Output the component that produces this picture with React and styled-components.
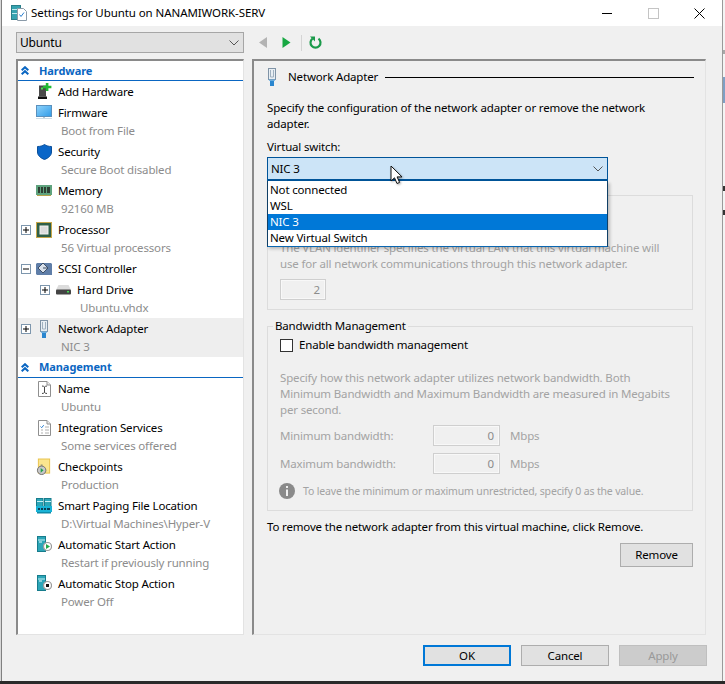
import React from "react";
import styled, { createGlobalStyle } from "styled-components";

const Global = createGlobalStyle`
  html, body { margin: 0; padding: 0; background: #fff; }
  * { box-sizing: border-box; }
`;

const Screen = styled.div`
  width: 725px; height: 684px; overflow: hidden;
  display: flex; flex-direction: column;
  font-family: "Noto Sans", "Open Sans", sans-serif;
  font-size: 11.5px; line-height: 16px; letter-spacing: -0.16px; color: #000; background: #f0f0f0;
`;
const Stage = styled.div`display: flex; height: 681px;`;
const BottomEdge = styled.div`height: 3px; background: #2a2a2a;`;
const LeftEdge = styled.div`width: 2px; background: #d8d8d8; border-right: 1px solid #808080;`;
const RightEdge = styled.div`
  position: relative; width: 3px; overflow: hidden;
  background: #f4f4f4; border-left: 1px solid #9a9a9a;
`;
const EdgeMark = styled.div`
  position: absolute; left: 0; width: 3px;
  top: ${p => p.$top}px; height: ${p => p.$h}px; background: ${p => p.$c};
`;
const Win = styled.div`width: 720px; display: flex; flex-direction: column; background: #f0f0f0;`;
const TitleBar = styled.div`
  height: 26px; background: #fff; display: flex; align-items: center;
  padding: 0 17px 0 9px; flex: none;
`;
const TitleText = styled.div`margin-left: 4px; flex: 1; white-space: nowrap; letter-spacing: -0.08px;`;
const Controls = styled.div`display: flex; align-items: center; gap: 35px;`;
const Body = styled.div`flex: 1; padding: 6px 15px 0 14px; display: flex; flex-direction: column;`;
const Columns = styled.div`
  display: grid; grid-template-columns: 228px 454px; grid-template-rows: 21px 576px;
  column-gap: 8px; row-gap: 6px;
`;
const Combo = styled.div`
  display: flex; align-items: center; justify-content: space-between;
  background: #e1e1e1; border: 1px solid #a6a6a6; padding: 0 4px 0 3px; font-size: 12px;
`;
const Toolbar = styled.div`display: flex; align-items: center; padding-left: 7px;`;
const Gap = styled.span`width: 14px;`;
const Sep = styled.div`width: 1px; height: 16px; background: #d4d4d4; margin: 0 7px 0 10px;`;
const Tree = styled.div`
  background: #fff; border-style: solid; border-width: 2px 1px 1px 2px;
  border-color: #8a8a8a #e3e3e3 #e3e3e3 #8a8a8a; display: flex; flex-direction: column;
`;
const GroupHead = styled.div`
  height: ${p => p.$h}px; flex: none; display: flex; align-items: center; padding-left: 3px;
  border-bottom: 1px solid #0a66c2; color: #0a66c2; font-weight: 700; font-size: 11px; letter-spacing: -0.08px;
`;
const GroupName = styled.span`margin-left: 10px;`;
const ItemBox = styled.div`background: ${p => (p.$selected ? "#eeeeee" : "transparent")};`;
const ItemRow = styled.div`
  height: 21px; display: flex; align-items: center; padding-left: ${p => 3 + p.$depth * 19}px;
`;
const ExpandSlot = styled.div`width: 15px; flex: none; display: flex; align-items: center;`;
const IconSlot = styled.div`width: 16px; height: 18px; flex: none; display: flex; align-items: center; justify-content: center; margin-right: 6px;`;
const ItemSub = styled.div`
  height: 18px; line-height: 16px; color: #8c8c8c; white-space: nowrap;
  padding-left: ${p => 43 + p.$depth * 19}px;
`;
const Panel = styled.div`
  background: #f0f0f0; border-style: solid; border-width: 2px 1px 1px 2px;
  border-color: #8a8a8a #e3e3e3 #e3e3e3 #8a8a8a; padding: 8px 12px 0 13px;
`;
const PanelHead = styled.div`display: flex; align-items: center; height: 16px;`;
const PanelTitle = styled.div`margin-left: 11px; margin-right: 7px; white-space: nowrap;`;
const HeadRule = styled.div`flex: 1; height: 1px; background: #000; margin-right: -1px;`;
const Para = styled.p`
  margin: ${p => p.$top || 0}px 0 0; color: ${p => (p.$off ? "#a3a3a3" : "#000")};
`;
const Label = styled.div`margin-top: 7px;`;
const SelectWrap = styled.div`position: relative; width: 341px; margin-top: 2px;`;
const SelectBox = styled.div`
  height: 24px; background: #cce4f7; border: 1px solid #005499;
  border-bottom-width: 2px; display: flex; align-items: center; justify-content: space-between;
  padding: 0 4px 0 3px;
`;
const Dropdown = styled.div`
  position: absolute; left: 0; right: 0; top: 24px; height: 66px; z-index: 3; padding-top: 1px;
  background: #fff; border: 1px solid #0f3f66; border-top: 0; border-bottom: 1px solid #0a66b0;
  box-shadow: 2px 2px 3px rgba(0,0,0,.22);
`;
const Option = styled.div`
  height: 16px; padding-left: 2px;
  background: ${p => (p.$on ? "#0078d7" : "transparent")}; color: ${p => (p.$on ? "#fff" : "#000")};
`;
const Pointer = styled.svg`
  position: absolute; left: 123px; top: 8px; z-index: 4;
  filter: drop-shadow(1px 1px 1px rgba(0,0,0,.35));
`;
const Frame = styled.div`
  height: 115px; margin-top: 14px; border: 1px solid #dcdcdc; padding: 44px 12px 0;
  color: #a3a3a3;
`;
const Field = styled.div`
  width: ${p => p.$w}px; height: 21px; border: 1px solid #cfcfcf; box-shadow: inset 0 0 0 1px #f8f8f8;
  background: #f0f0f0; color: #8c8c8c; text-align: right; padding-right: 5px; line-height: 19px; flex: none;
`;
const VlanField = styled(Field)`margin-top: 7px;`;
const Fieldset = styled.fieldset`
  margin: 8px 0 0; padding: 3px 12px 11px; border: 1px solid #dcdcdc; min-width: 0;
`;
const Legend = styled.legend`padding: 0 2px; margin-left: -7px; line-height: 16px;`;
const CheckRow = styled.label`display: flex; align-items: center; height: 16px;`;
const CheckBox = styled.span`
  width: 13px; height: 13px; border: 1px solid #333; background: #fff; margin-right: 6px; flex: none;
`;
const BandRow = styled.div`
  display: flex; align-items: center; margin-top: 7px; color: #a3a3a3;
`;
const BandLabel = styled.div`width: 153px; line-height: 15px; padding-bottom: 1px;`;
const Unit = styled.div`margin-left: 10px;`;
const InfoRow = styled.div`
  display: flex; align-items: center; gap: 8px; margin-top: 9px; margin-left: -1px;
  color: #a3a3a3; white-space: nowrap; font-size: 10.5px; letter-spacing: -0.16px;
`;
const InfoGlyph = styled.svg`flex: none;`;
const RemoveRow = styled.div`display: flex; justify-content: flex-end; margin-top: 8px; `;
const Btn = styled.div`
  display: flex; align-items: center; justify-content: center;
  width: ${p => p.$w}px; height: ${p => p.$h}px;
  background: ${p => (p.$off ? "#cccccc" : "#e1e1e1")};
  color: ${p => (p.$off ? "#999" : "#000")};
  border: ${p => (p.$main ? "2px solid #0078d7" : p.$off ? "1px solid #bfbfbf" : "1px solid #adadad")};
`;
const Footer = styled.div`display: flex; justify-content: flex-end; gap: 10px; margin-top: 10px;`;
const Expander = styled.svg`display: block;`;

const Plus = ({ open }) => (
  <Expander width="10" height="10" viewBox="0 0 10 10">
    <rect x=".5" y=".5" width="9" height="9" fill="#fff" stroke="#7d96ad" />
    <path d={open ? "M2 5h6" : "M2 5h6M5 2v6"} stroke="#000" fill="none" />
  </Expander>
);
const Chevron = () => (
  <svg width="10" height="6" viewBox="0 0 10 6"><path d="M.5.5 5 5 9.500.5" fill="none" stroke="#555" /></svg>
);
const DoubleUp = () => (
  <svg width="8" height="9" viewBox="0 0 8 9" fill="none" stroke="#0a66c2" strokeWidth="2">
    <path d="M.7 4.300 4 1.200l3.300 3.100M.7 8.300 4 5.200l3.300 3.100" />
  </svg>
);
const WinIcon = () => (
  <svg width="16" height="16" viewBox="0 0 16 16">
    <rect x="0.500" y="0.500" width="9" height="14" fill="#35a3b0" stroke="#2a7f8a" />
    <path d="M1 4.500h8M1 8.500h8" stroke="#bfeaf0" />
    <path d="M6.500 3.500h6l3 3v9h-9z" fill="#fff" stroke="#8a9aa8" />
    <path d="M8.500 9.500l1.500 2 3-4" stroke="#2a7fd0" fill="none" />
  </svg>
);
const AddHw = () => (
  <svg width="16" height="17" viewBox="0 0 16 17">
    <path d="M3 2.500h7v11H3z" fill="#4a4a4a" />
    <rect x="2" y="13.500" width="9" height="2.500" fill="#111" />
    <rect x="5" y="4.500" width="2" height="2" fill="#4fe04f" />
    <path d="M9.800 0h2.600v2.700h3V5.300h-3V8H9.800V5.300H7V2.700h2.800z" fill="#22bb33" />
  </svg>
);
const Monitor = () => (
  <svg width="16" height="15" viewBox="0 0 16 15">
    <defs><linearGradient id="mon" x1="0" y1="0" x2="1" y2="1"><stop offset="0" stopColor="#8fd3fb" /><stop offset="1" stopColor="#2f9be8" /></linearGradient></defs>
    <rect x=".5" y=".5" width="15" height="11" fill="url(#mon)" stroke="#5a90bd" />
    <path d="M7 12h2v1H7z" fill="#b5c9d6" />
    <path d="M0 13.500h16" stroke="#cfdde6" />
  </svg>
);
const Shield = () => (
  <svg width="15" height="16" viewBox="0 0 15 16">
    <path d="M7.500.500C9.500 2 12 2.500 14.500 2.500V8c0 3.500-3 6-7 7.500C3.500 14 .5 11.500.5 8V2.500C3 2.500 5.500 2 7.500.500z" fill="#0a66c8" stroke="#0a4f9a" />
  </svg>
);
const Ram = () => (
  <svg width="16" height="11" viewBox="0 0 16 11">
    <rect width="16" height="10" fill="#5fa37e" />
    <path d="M2 2h2v6H2zM5 2h2v6H5zM8 2h2v6H8zM11 2h3v6h-3z" fill="#2e3f33" />
    <path d="M1 10h14v1H1z" fill="#b5a24a" />
  </svg>
);
const Cpu = () => (
  <svg width="16" height="16" viewBox="0 0 16 16">
    <rect width="16" height="16" fill="#c7a64a" />
    <rect x="1" y="1" width="14" height="14" fill="#2f5f48" />
    <rect x="4" y="4" width="8" height="8" fill="#dcdcdc" stroke="#f2f2f2" />
  </svg>
);
const Scsi = () => (
  <svg width="16" height="14" viewBox="0 0 16 14">
    <path d="M1 1h14l1 1v11H1L0 12V2z" fill="#5f7ea8" />
    <path d="M7 1l5 5-5 5-5-5z" fill="#d8e0ea" stroke="#3c4e66" />
    <path d="M12 6h-5" stroke="#3c4e66" />
  </svg>
);
const Drive = () => (
  <svg width="15" height="10" viewBox="0 0 15 10">
    <path d="M2.500 0h10L15 5H0z" fill="#dcdcdc" />
    <rect y="4.500" width="15" height="5" rx="1" fill="#444" />
    <rect x="11" y="6" width="2" height="1.500" fill="#44dd55" />
  </svg>
);
const Nic = () => (
  <svg width="10" height="18" viewBox="0 0 10 18">
    <rect x="1.500" y=".5" width="7" height="11" fill="#e8eef3" stroke="#7f93a6" />
    <path d="M3.500 2v7h3V2" fill="none" stroke="#9fb0bf" />
    <path d="M1.500 11.500h7l-1 1.500h-5z" fill="#6aaee0" />
    <rect x="3" y="13" width="4" height="5" fill="#2a86cf" />
  </svg>
);
const Doc = ({ children }) => (
  <svg width="13" height="16" viewBox="0 0 13 16">
    <path d="M.5.5h8.500l3.500 3.500v11.500H.5z" fill="#fff" stroke="#8f8f8f" />
    <path d="M9 .5V4h3.500" fill="#eee" stroke="#8f8f8f" />
    {children}
  </svg>
);
const NameIcon = () => (
  <Doc><path d="M4 5c1 0 2 .3 2.500 1C7 5.300 8 5 9 5M4 12.500c1 0 2-.3 2.500-1 .5.700 1.500 1 2.500 1M6.500 6v5.500" stroke="#444" fill="none" /></Doc>
);
const IntIcon = () => (
  <Doc>
    <path d="M2.500 6.500l1.200 1.200 2-2.500" stroke="#2a7fd0" fill="none" />
    <path d="M7 7h4M7 10h4M7 13h4M3 10h2M3 13h2" stroke="#b0b0b0" fill="none" />
  </Doc>
);
const Check = () => (
  <svg width="17" height="18" viewBox="0 0 17 18">
    <rect x="2.500" y=".5" width="12" height="15" fill="#fbe58f" stroke="#e8c24a" />
    <circle cx="6" cy="12.500" r="4.500" fill="#c8c8c8" stroke="#6b6b6b" />
    <path d="M5 10l3 2.500-3 2.500z" fill="#22a34a" />
    <path d="M5 7h2" stroke="#6b6b6b" />
  </svg>
);
const Paging = () => (
  <svg width="16" height="16" viewBox="0 0 16 16">
    <rect x=".5" y=".5" width="6.500" height="8" fill="#2ca6b8" stroke="#177c8c" />
    <rect x="8.500" y=".5" width="6.500" height="8" fill="#2ca6b8" stroke="#177c8c" />
    <path d="M1 3.500h6M9 3.500h6" stroke="#c6f0f5" />
    <rect y="8" width="16" height="6" fill="#19b3d6" />
    <path d="M2 10h2v2H2zM5 10h2v2H5zM8 10h2v2H8zM11 10h3v2h-3z" fill="#0b3f55" />
    <rect x="1" y="14" width="14" height="1.500" fill="#0e8aa8" />
  </svg>
);
const Action = ({ stop }) => (
  <svg width="15" height="17" viewBox="0 0 15 17">
    <rect x=".5" y=".5" width="8" height="15" fill="#2ca6b8" stroke="#177c8c" />
    <path d="M1 4h7" stroke="#c6f0f5" />
    <path d="M2 6h3" stroke="#e6fafc" />
    <circle cx="10.500" cy="10.500" r="4" fill="#fff" stroke="#9a9a9a" strokeWidth="1.200" />
    {stop ? <rect x="9" y="9" width="3" height="3" fill="#111" /> : <path d="M9 8l4 2.500L9 13z" fill="#1fa84a" />}
  </svg>
);
const Back = () => (<svg width="9" height="11" viewBox="0 0 9 11"><path d="M8 0v11L0 5.500z" fill="#b3b3b3" /></svg>);
const Forward = () => (<svg width="9" height="11" viewBox="0 0 9 11"><path d="M.5 0v11l8-5.500z" fill="#18a843" /></svg>);
const Refresh = () => (
  <svg width="13" height="13" viewBox="0 0 13 13">
    <path d="M3.500 2.600A5 5 0 1 0 9.500 2.600" fill="none" stroke="#1a9a4a" strokeWidth="2.200" />
    <path d="M1 0.500h5v5z" fill="#1a9a4a" />
  </svg>
);
const Info = () => (
  <InfoGlyph width="16" height="16" viewBox="0 0 16 16">
    <circle cx="8" cy="8" r="8" fill="#8a8a8a" />
    <rect x="7" y="3" width="2" height="2" fill="#f0f0f0" />
    <rect x="7" y="6.500" width="2" height="6.500" fill="#f0f0f0" />
  </InfoGlyph>
);
const Minimize = () => (<svg width="11" height="3" viewBox="0 0 11 3"><path d="M0 1.500h10" stroke="#000" /></svg>);
const Maximize = () => (<svg width="11" height="11" viewBox="0 0 11 11"><rect x=".5" y=".5" width="10" height="10" fill="none" stroke="#c4c4c4" /></svg>);
const Close = () => (<svg width="11" height="11" viewBox="0 0 11 11"><path d="M.5.5l10 10M10.500.5l-10 10" stroke="#000" fill="none" /></svg>);

const Item = ({ icon, name, sub, expand, depth = 0, selected }) => (
  <ItemBox $selected={selected}>
    <ItemRow $depth={depth}>
      <ExpandSlot>{expand === "plus" ? <Plus /> : expand === "minus" ? <Plus open /> : null}</ExpandSlot>
      <IconSlot>{icon}</IconSlot>
      <span>{name}</span>
    </ItemRow>
    {sub ? <ItemSub $depth={depth}>{sub}</ItemSub> : null}
  </ItemBox>
);

export default function App() {
  return (
    <Screen>
      <Global />
      <Stage>
        <LeftEdge />
        <Win>
          <TitleBar>
            <WinIcon />
            <TitleText>Settings for Ubuntu on NANAMIWORK-SERV</TitleText>
            <Controls><Minimize /><Maximize /><Close /></Controls>
          </TitleBar>
          <Body>
            <Columns>
              <Combo>Ubuntu<Chevron /></Combo>
              <Toolbar>
                <Back />
                <Gap />
                <Forward />
                <Sep />
                <Refresh />
              </Toolbar>
              <Tree>
                <GroupHead $h={20}><DoubleUp /><GroupName>Hardware</GroupName></GroupHead>
                <Item icon={<AddHw />} name="Add Hardware" />
                <Item icon={<Monitor />} name="Firmware" sub="Boot from File" />
                <Item icon={<Shield />} name="Security" sub="Secure Boot disabled" />
                <Item icon={<Ram />} name="Memory" sub="92160 MB" />
                <Item icon={<Cpu />} name="Processor" sub="56 Virtual processors" expand="plus" />
                <Item icon={<Scsi />} name="SCSI Controller" expand="minus" />
                <Item icon={<Drive />} name="Hard Drive" sub="Ubuntu.vhdx" expand="plus" depth={1} />
                <Item icon={<Nic />} name="Network Adapter" sub="NIC 3" expand="plus" selected />
                <GroupHead $h={21}><DoubleUp /><GroupName>Management</GroupName></GroupHead>
                <Item icon={<NameIcon />} name="Name" sub="Ubuntu" />
                <Item icon={<IntIcon />} name="Integration Services" sub="Some services offered" />
                <Item icon={<Check />} name="Checkpoints" sub="Production" />
                <Item icon={<Paging />} name="Smart Paging File Location" sub="D:\Virtual Machines\Hyper-V" />
                <Item icon={<Action />} name="Automatic Start Action" sub="Restart if previously running" />
                <Item icon={<Action stop />} name="Automatic Stop Action" sub="Power Off" />
              </Tree>
              <Panel>
                <PanelHead>
                  <Nic />
                  <PanelTitle>Network Adapter</PanelTitle>
                  <HeadRule />
                </PanelHead>
                <Para $top={15}>Specify the configuration of the network adapter or remove the network<br />adapter.</Para>
                <Label>Virtual switch:</Label>
                <SelectWrap>
                  <SelectBox>NIC 3<Chevron /></SelectBox>
                  <Dropdown>
                    <Option>Not connected</Option>
                    <Option>WSL</Option>
                    <Option $on>NIC 3</Option>
                    <Option>New Virtual Switch</Option>
                  </Dropdown>
                  <Pointer width="15" height="20" viewBox="0 0 15 20">
                    <path d="M1 1v15l3.500-3.200 2.500 5.700 2.600-1.100-2.500-5.500h4.900z" fill="#fff" stroke="#111" />
                  </Pointer>
                </SelectWrap>
                <Frame>
                  The VLAN identifier specifies the virtual LAN that this virtual machine will<br />
                  use for all network communications through this network adapter.
                  <VlanField $w={46}>2</VlanField>
                </Frame>
                <Fieldset>
                  <Legend>Bandwidth Management</Legend>
                  <CheckRow><CheckBox />Enable bandwidth management</CheckRow>
                  <Para $top={17} $off>
                    Specify how this network adapter utilizes network bandwidth. Both<br />
                    Minimum Bandwidth and Maximum Bandwidth are measured in Megabits<br />
                    per second.
                  </Para>
                  <BandRow><BandLabel>Minimum bandwidth:</BandLabel><Field $w={67}>0</Field><Unit>Mbps</Unit></BandRow>
                  <BandRow><BandLabel>Maximum bandwidth:</BandLabel><Field $w={67}>0</Field><Unit>Mbps</Unit></BandRow>
                  <InfoRow><Info />To leave the minimum or maximum unrestricted, specify 0 as the value.</InfoRow>
                </Fieldset>
                <Para $top={8}>To remove the network adapter from this virtual machine, click Remove.</Para>
                <RemoveRow><Btn $w={73} $h={24}>Remove</Btn></RemoveRow>
              </Panel>
            </Columns>
            <Footer>
              <Btn $w={88} $h={21} $main>OK</Btn>
              <Btn $w={88} $h={21}>Cancel</Btn>
              <Btn $w={88} $h={21} $off>Apply</Btn>
            </Footer>
          </Body>
        </Win>
        <RightEdge>
          <EdgeMark $top={50} $h={4} $c="#a8a8a8" />
          <EdgeMark $top={77} $h={26} $c="#7f9fc4" />
          <EdgeMark $top={186} $h={5} $c="#333" />
          <EdgeMark $top={210} $h={5} $c="#333" />
        </RightEdge>
      </Stage>
      <BottomEdge />
    </Screen>
  );
}
